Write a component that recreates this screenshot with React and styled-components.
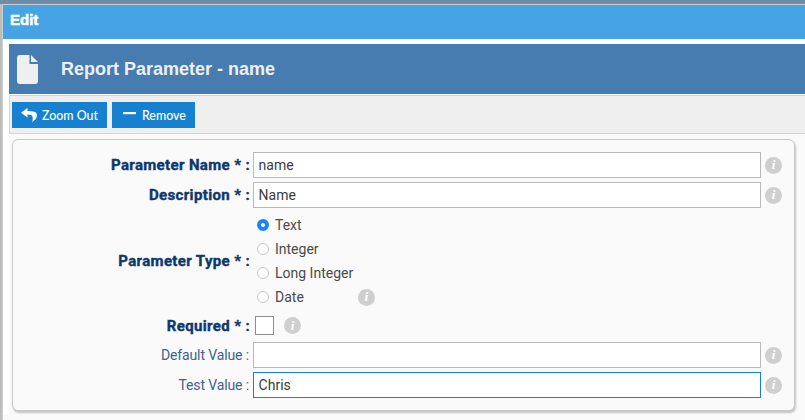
import React from "react";
import styled, { createGlobalStyle } from "styled-components";

const GlobalStyle = createGlobalStyle`
  html, body {
    margin: 0;
    padding: 0;
    height: 420px;
    overflow: hidden;
    background: linear-gradient(#6f8ca8 0, #6f8ca8 4px, #bdbdbd 4px);
    font-family: Roboto, "Liberation Sans", sans-serif;
  }
`;

const Dialog = styled.div`
  margin: 4px 0 0 2px;
  height: 416px;
  box-sizing: border-box;
  background: #fafafa;
  border-top: 1px solid #cfcfcf;
  border-left: 1px solid #cfcfcf;
`;

const TitleBar = styled.div`
  height: 34px;
  padding-left: 7px;
  background: #47a4e4;
  color: #fff;
  font: bold 15px/30px "Liberation Sans", sans-serif;
  -webkit-text-stroke: 0.5px #fff;
`;

const Body = styled.div`
  padding: 4px 0 0 6px;
  border-top: 1px solid #fff;
  background: #fff;
`;

const Header = styled.div`
  display: flex;
  align-items: center;
  height: 50px;
  padding-left: 8px;
  background: #477cb0;
  color: #efefef;
  font: bold 18px "Liberation Sans", sans-serif;
`;

const HeaderTitle = styled.span`
  margin-left: 23px;
`;

const Toolbar = styled.div`
  display: flex;
  gap: 5px;
  height: 39px;
  box-sizing: border-box;
  margin-top: 1px;
  padding: 6px 0 0 2px;
  background: #efefef;
  border: 1px solid #d4d4d4;
  border-width: 1px 0 1px 1px;
`;

const ToolButton = styled.button`
  display: flex;
  align-items: center;
  height: 26px;
  padding: 0 9px 0 ${(p) => p.$left}px;
  border: 0;
  background: #1781d1;
  color: #fff;
  font: 500 12.4px Lato, sans-serif;
`;

const ButtonLabel = styled.span`
  margin-left: ${(p) => p.$gap}px;
`;

const Content = styled.div`
  height: 281px;
  box-sizing: border-box;
  padding: 5px 0 0 3px;
  background: #fafafa;
`;

const Panel = styled.div`
  display: flex;
  flex-direction: column;
  gap: 4px;
  width: 783px;
  height: 272px;
  box-sizing: border-box;
  padding: 12px 0 0 0;
  background: #fafafa;
  border: 1px solid #c8c8c8;
  border-radius: 6px;
  box-shadow: 1px 2px 2px #c4c4c4;
`;

const Row = styled.div`
  display: flex;
  align-items: center;
  min-height: 25px;
`;

const Label = styled.label`
  width: 237px;
  flex: none;
  box-sizing: border-box;
  text-align: right;
  padding-right: ${(p) => (p.$required ? 0 : 1)}px;
  font-size: ${(p) => (p.$required ? 15 : 14)}px;
  font-weight: ${(p) => (p.$required ? 700 : 400)};
  letter-spacing: ${(p) => (p.$required ? 0.36 : -0.12)}px;
  -webkit-text-stroke: ${(p) => (p.$required ? 0.4 : 0)}px #0d386d;
  color: ${(p) => (p.$required ? "#0d386d" : "#3f6290")};
`;

const TextInput = styled.input`
  width: 508px;
  height: 26px;
  box-sizing: border-box;
  margin-left: 3px;
  padding: 0 5px 0 4.6px;
  border: 1px solid ${(p) => (p.$focused ? "#1781d1" : "#b9b9b9")};
  outline: 0;
  background: #fff;
  color: #3c3c3c;
  font: 14px Roboto, sans-serif;
`;

const RadioGroup = styled.div`
  display: flex;
  flex-direction: column;
  padding-top: 1px;
  margin-left: 7px;
`;

const RadioRow = styled.div`
  display: flex;
  align-items: center;
  height: 24px;
  color: #4a4a4a;
  font-size: 14px;
`;

const Radio = styled.span`
  width: 12px;
  height: 12px;
  box-sizing: border-box;
  margin-right: 6px;
  border-radius: 50%;
  background: #fff;
  border: ${(p) => (p.$checked ? "4px solid #1a82f7" : "1px solid #c8c8c8")};
`;

const Checkbox = styled.span`
  width: 19px;
  height: 19px;
  box-sizing: border-box;
  margin-left: 5px;
  background: #fff;
  border: 1px solid #8e8e8e;
`;

const InfoBadge = styled.span`
  display: inline-flex;
  align-items: center;
  justify-content: center;
  width: 17px;
  height: 17px;
  flex: none;
  margin-left: ${(p) => p.$left ?? 4}px;
  border-radius: 50%;
  background: #cfcfcf;
  color: #fff;
  font: italic bold 13px "Liberation Serif", serif;
`;

function FileIcon() {
  return (
    <svg width="21" height="29" viewBox="0 0 21 29">
      <path
        d="M3 0h9.500v9H21v17a3 3 0 0 1-3 3H3a3 3 0 0 1-3-3V3a3 3 0 0 1 3-3zM14 0l7 7h-7z"
        fill="#efefef"
      />
    </svg>
  );
}

function ReplyIcon() {
  return (
    <svg width="16" height="14" viewBox="0 0 16 14">
      <path
        d="M6.500 0L0 4.800 6.500 9.600V6.600c3.500 0 5.300 1 5.300 3.800 0 1.300-.4 2.500-1 3.600 3-1.500 5.200-4 5.200-6.800C16 3.600 12 2.900 6.500 2.900z"
        fill="#fff"
      />
    </svg>
  );
}

function MinusIcon() {
  return (
    <svg width="13" height="14" viewBox="0 0 13 14">
      <rect x="0" y="4" width="13" height="2.200" fill="#fff" />
    </svg>
  );
}

const radioOptions = ["Text", "Integer", "Long Integer", "Date"];

export default function App() {
  return (
    <>
      <GlobalStyle />
      <Dialog>
        <TitleBar>Edit</TitleBar>
        <Body>
          <Header>
            <FileIcon />
            <HeaderTitle>Report Parameter - name</HeaderTitle>
          </Header>
          <Toolbar>
            <ToolButton $left={9}>
              <ReplyIcon />
              <ButtonLabel $gap={5}>Zoom Out</ButtonLabel>
            </ToolButton>
            <ToolButton $left={11}>
              <MinusIcon />
              <ButtonLabel $gap={6}>Remove</ButtonLabel>
            </ToolButton>
          </Toolbar>
          <Content>
            <Panel>
              <Row>
                <Label $required>Parameter Name * :</Label>
                <TextInput defaultValue="name" />
                <InfoBadge>i</InfoBadge>
              </Row>
              <Row>
                <Label $required>Description * :</Label>
                <TextInput defaultValue="Name" />
                <InfoBadge>i</InfoBadge>
              </Row>
              <Row>
                <Label $required>Parameter Type * :</Label>
                <RadioGroup>
                  {radioOptions.map((option, i) => (
                    <RadioRow key={option}>
                      <Radio $checked={i === 0} />
                      {option}
                      {option === "Date" && <InfoBadge $left={54}>i</InfoBadge>}
                    </RadioRow>
                  ))}
                </RadioGroup>
              </Row>
              <Row>
                <Label $required>Required * :</Label>
                <Checkbox />
                <InfoBadge $left={10}>i</InfoBadge>
              </Row>
              <Row>
                <Label>Default Value :</Label>
                <TextInput />
                <InfoBadge>i</InfoBadge>
              </Row>
              <Row>
                <Label>Test Value :</Label>
                <TextInput $focused defaultValue="Chris" />
                <InfoBadge>i</InfoBadge>
              </Row>
            </Panel>
          </Content>
        </Body>
      </Dialog>
    </>
  );
}
